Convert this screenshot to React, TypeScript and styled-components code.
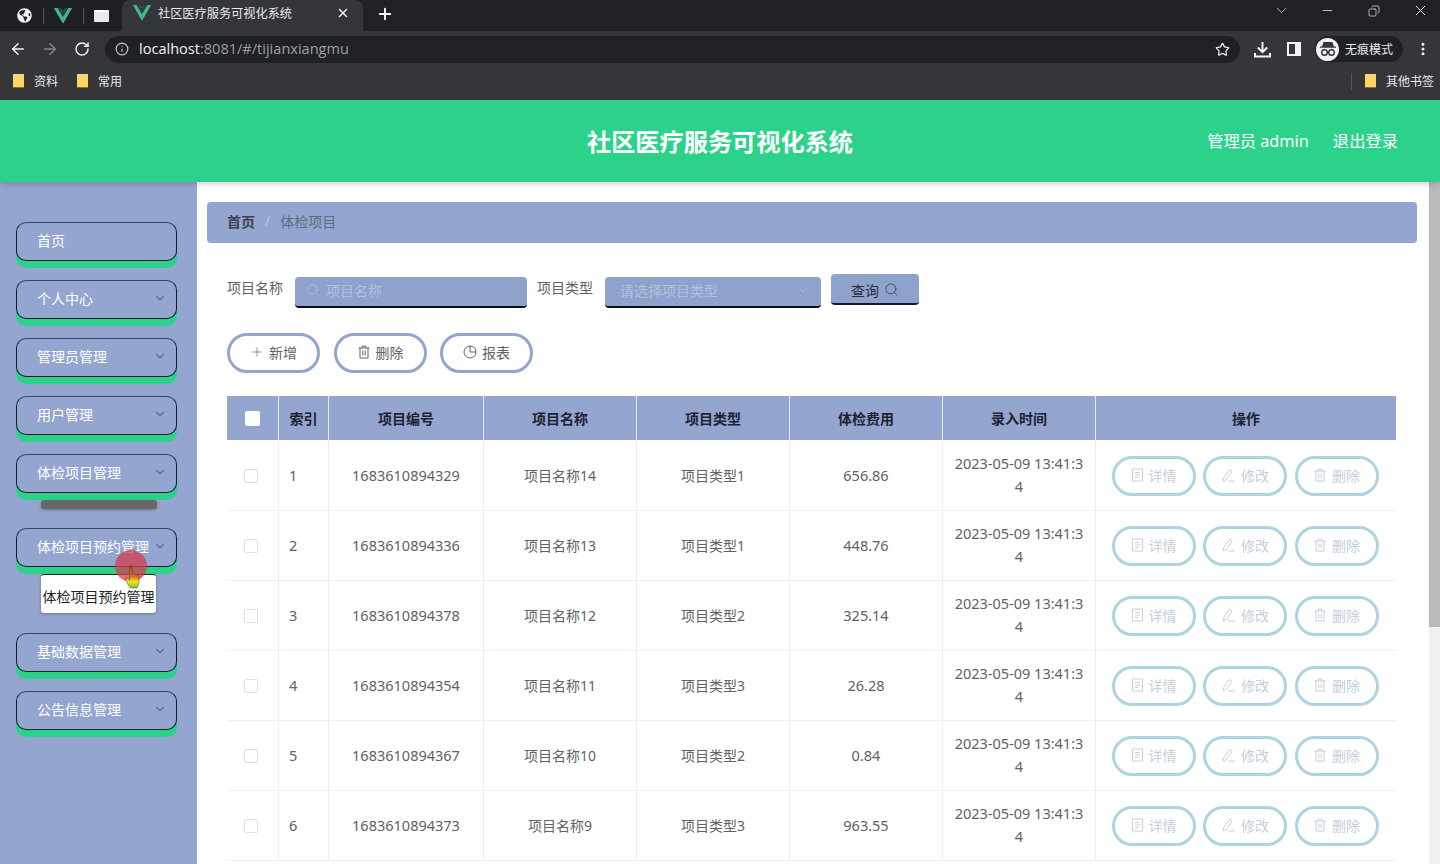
import React from "react";
import styled, { createGlobalStyle } from "styled-components";
import { ArrowLeft, ArrowRight, RotateCw, Info, Star, ChevronDown, Minus, X, Plus, Search, Copy, MoreVertical } from "lucide-react";
import { FaGlobeAmericas } from "react-icons/fa";

const Global = createGlobalStyle`
  html, body { margin: 0; padding: 0; }
  body { font-family: "Noto Sans", "Noto Sans CJK SC", sans-serif; background: #fff; }
  #root { width: 1440px; height: 864px; overflow: hidden; }
  * { box-sizing: border-box; }
`;

const Page = styled.div`
  width: 1440px;
  height: 864px;
  display: flex;
  flex-direction: column;
  overflow: hidden;
  position: relative;
`;

/* ---------- browser chrome ---------- */
const TabStrip = styled.div`
  height: 31px;
  background: #202124;
  display: flex;
  align-items: stretch;
  color: #fff;
`;
const PinnedTabs = styled.div`
  width: 122px;
  display: flex;
  align-items: center;
  padding-left: 17px;
  background: #1f2023;
`;
const PinnedSlot = styled.span<{ $w: number; $pad?: number; $sep?: boolean }>`
  width: ${(p) => p.$w}px;
  flex: none;
  height: 16px;
  display: flex;
  align-items: center;
  padding-left: ${(p) => p.$pad ?? 0}px;
  border-right: ${(p) => (p.$sep ? "1px solid #55575b" : "none")};
`;
const ActiveTab = styled.div`
  width: 241px;
  background: #35363a;
  border-radius: 8px 8px 0 0;
  display: flex;
  align-items: center;
  padding: 0 13px 5px 11px;
  font-size: 12.2px;
  color: #e8eaed;
  gap: 7px;
`;
const TabTitle = styled.span`
  flex: 1;
  white-space: nowrap;
`;
const NewTab = styled.span`
  width: 44px;
  display: flex;
  align-items: center;
  justify-content: center;
  padding-bottom: 3px;
`;
const WindowControls = styled.div`
  margin-left: auto;
  display: flex;
  align-items: center;
  padding: 0 11px 10px 0;
  gap: 29.5px;
  color: #e8eaed;
`;
const WindowSlot = styled.span`
  width: 17px;
  display: flex;
  align-items: center;
  justify-content: center;
`;
const RestoreIcon = styled(Copy)`
  transform: scaleX(-1);
`;
const ToolBar = styled.div`
  height: 36px;
  background: #35363a;
  display: flex;
  align-items: center;
  padding: 0 8px 0 2px;
  color: #e8eaed;
`;
const NavButton = styled.span<{ $dim?: boolean }>`
  width: 32px;
  display: flex;
  justify-content: center;
  color: ${(p) => (p.$dim ? "#85878a" : "#f1f3f4")};
`;
const Omnibox = styled.div`
  width: 1135px;
  height: 27px;
  margin-left: 7px;
  border-radius: 14px;
  background: #202124;
  display: flex;
  align-items: center;
  padding: 0 10px;
  color: #9aa0a6;
`;
const UrlText = styled.span`
  margin-left: 10px;
  flex: 1;
  padding-bottom: 2px;
  font-family: "Open Sans", "Noto Sans", sans-serif;
  font-size: 14.55px;
  b { font-weight: 400; color: #f1f3f4; }
`;
const ToolIcons = styled.div`
  display: flex;
  align-items: center;
  margin-left: 14px;
  gap: 16px;
`;
const Incognito = styled.div`
  width: 88px;
  height: 26px;
  margin-left: -2px;
  border-radius: 13px;
  background: #202124;
  display: flex;
  align-items: center;
  gap: 6px;
  padding-left: 1px;
  font-size: 12px;
  color: #e8eaed;
`;
const IncognitoBadge = styled.span`
  width: 23px;
  height: 23px;
  border-radius: 50%;
  background: #f1f3f4;
  display: flex;
  align-items: center;
  justify-content: center;
`;
const MoreIcon = styled(MoreVertical)`
  margin-left: -4px;
  color: #f1f3f4;
`;
const BookmarkBar = styled.div`
  height: 33px;
  background: #35363a;
  display: flex;
  align-items: center;
  padding: 0 6px 5px 12px;
  font-size: 12px;
  color: #e8eaed;
`;
const Bookmark = styled.span`
  display: flex;
  align-items: center;
  gap: 9px;
  margin-right: 18px;
`;
const OtherBookmarks = styled.span`
  margin-left: auto;
  display: flex;
  align-items: center;
  border-left: 1px solid #55575b;
  padding-left: 12px;
  gap: 9px;
  height: 17px;
`;

/* ---------- app header ---------- */
const Header = styled.header`
  height: 82px;
  background: #2dd28a;
  color: #fff;
  display: flex;
  align-items: center;
  justify-content: center;
  padding-bottom: 2px;
  position: relative;
  z-index: 3;
  box-shadow: 0 2px 6px rgba(0, 0, 0, 0.18);
`;
const AppTitle = styled.h1`
  margin: 0;
  font-size: 24.2px;
  font-weight: 700;
`;
const HeaderUser = styled.div`
  position: absolute;
  right: 42px;
  top: 0;
  bottom: 2px;
  display: flex;
  align-items: center;
  gap: 24px;
  font-size: 16.3px;
`;

/* ---------- body ---------- */
const Body = styled.div`
  flex: 1;
  min-height: 0;
  display: flex;
`;
const Sidebar = styled.nav`
  width: 197px;
  flex: none;
  background: #94a5cf;
  padding: 40px 16px 0;
  display: flex;
  flex-direction: column;
`;
const MenuItem = styled.div`
  width: 161px;
  height: 39px;
  flex: none;
  margin-bottom: 19px;
  border: 1.5px solid #161c30;
  border-top-color: #3a4670;
  border-radius: 10px;
  background: #94a5cf;
  box-shadow: 0 7px 0 #2dd28a;
  display: flex;
  align-items: center;
  justify-content: space-between;
  padding: 0 9px 4px 20px;
  font-size: 14px;
  color: #fff;
  white-space: nowrap;
`;
const MenuArrow = styled(ChevronDown)`
  color: #5d6b93;
`;
const CollapsedSub = styled.div`
  width: 116px;
  height: 9px;
  flex: none;
  margin: -12px 0 19px 25px;
  border-radius: 3px;
  background: #68686c;
  box-shadow: 0 1px 3px rgba(0, 0, 0, 0.3);
`;
const SubItem = styled.div`
  width: 115px;
  height: 39px;
  flex: none;
  margin: -12px 0 20px 25px;
  padding-top: 3px;
  border-radius: 3px;
  border-top: 1px solid #222;
  background: #fff;
  color: #222;
  font-size: 14px;
  display: flex;
  align-items: center;
  justify-content: center;
  white-space: nowrap;
  box-shadow: 0 1px 3px rgba(0, 0, 0, 0.3);
`;
const Content = styled.main`
  flex: 1;
  min-width: 0;
  background: #fff;
  padding: 20px 0 0 10px;
`;
const Scrollbar = styled.div`
  width: 11px;
  flex: none;
  background: #f1f1f1;
`;
const ScrollThumb = styled.div`
  height: 445px;
  background: #bababa;
`;
const Breadcrumb = styled.div`
  width: 1210px;
  height: 41px;
  background: #94a5cf;
  border-radius: 4px;
  display: flex;
  align-items: center;
  padding: 0 0 4px 20px;
  font-size: 14px;
`;
const CrumbStrong = styled.span`
  font-weight: 700;
  color: #3b4252;
`;
const CrumbSep = styled.span`
  margin: 0 10px;
  color: #c0c4cc;
`;
const CrumbLast = styled.span`
  color: #606a85;
`;
const FilterRow = styled.div`
  display: flex;
  align-items: flex-start;
  margin: 31px 0 0 20px;
  height: 34px;
  font-size: 14px;
  color: #606266;
`;
const FilterLabel = styled.label<{ $w: number }>`
  width: ${(p) => p.$w}px;
  line-height: 28px;
`;
const FilterField = styled.div<{ $w: number; $left: number; $right: number }>`
  width: ${(p) => p.$w}px;
  margin: 3px 10px 0 0;
  height: 31px;
  background: #8ea2cc;
  border-radius: 4px;
  border-bottom: 2px solid #0c0c10;
  display: flex;
  align-items: center;
  padding: 0 ${(p) => p.$right}px 3px ${(p) => p.$left}px;
  gap: 6px;
  color: #b3c0dd;
  font-size: 14px;
`;
const FieldText = styled.span`
  flex: 1;
`;
const QueryButton = styled.button`
  width: 88px;
  height: 31px;
  border: 0;
  border-bottom: 2px solid #14182a;
  border-radius: 4px;
  background: #8ea2cc;
  color: #2b2f3a;
  font: inherit;
  font-size: 14px;
  display: flex;
  align-items: center;
  justify-content: center;
  gap: 5px;
  padding: 2px 0 0;
`;
const ActionRow = styled.div`
  display: flex;
  gap: 13.5px;
  margin: 25px 0 0 20px;
`;
const PillButton = styled.button`
  width: 93px;
  height: 40px;
  border: 3px solid #94a5cf;
  border-radius: 20px;
  background: #fff;
  color: #606266;
  font: inherit;
  font-size: 14px;
  display: flex;
  align-items: center;
  justify-content: center;
  gap: 5px;
  padding: 0 0 3px;
`;
const Table = styled.div`
  width: 1169px;
  margin: 23px 0 0 20px;
  font-size: 14px;
  color: #606266;
`;
const cols = "52px 50px 155px 153px 153px 153px 153px 300px";
const HeadRow = styled.div`
  display: grid;
  grid-template-columns: ${cols};
  height: 44px;
  margin-bottom: 1px;
  background: #94a5cf;
  color: #1f2230;
  font-weight: 700;
`;
const HeadCell = styled.div`
  display: flex;
  align-items: center;
  justify-content: center;
  border-right: 1px solid #e6ebf5;
  &:last-child { border-right: 0; }
`;
const Row = styled.div`
  display: grid;
  grid-template-columns: ${cols};
  height: 70px;
`;
const Cell = styled.div<{ $left?: boolean; $num?: boolean }>`
  display: flex;
  align-items: center;
  justify-content: ${(p) => (p.$left ? "flex-start" : "center")};
  padding: 0 10px;
  border-right: 1px solid #ebeef5;
  border-bottom: 1px solid #ebeef5;
  line-height: 23px;
  text-align: center;
  font-size: ${(p) => (p.$num ? "14.5px" : "14px")};
`;
const CheckBox = styled.span<{ $head?: boolean }>`
  width: ${(p) => (p.$head ? 15 : 14)}px;
  height: ${(p) => (p.$head ? 15 : 14)}px;
  margin-right: ${(p) => (p.$head ? 0 : 3)}px;
  border-radius: 2px;
  background: #fff;
  border: 1px solid ${(p) => (p.$head ? "#fff" : "#dcdfe6")};
`;
const DateText = styled.span`
  display: block;
  width: 133px;
  padding-bottom: 2px;
  word-break: break-all;
`;
const OpsCell = styled(Cell)`
  gap: 7.5px;
  padding: 0 2px 0 0;
  border-right: 0;
`;
const OpButton = styled.button`
  width: 84px;
  height: 40px;
  border: 3px solid #aed3e1;
  border-radius: 20px;
  background: #fff;
  color: #c3cfdb;
  font: inherit;
  font-size: 14px;
  display: flex;
  align-items: center;
  justify-content: center;
  gap: 5px;
  padding: 0 0 1px;
`;
const CursorMark = styled.div`
  position: absolute;
  left: 115px;
  top: 550px;
  width: 32px;
  height: 32px;
  border-radius: 50%;
  background: rgba(214, 60, 80, 0.75);
  z-index: 5;
`;
const CursorHand = styled.svg`
  position: absolute;
  left: 9px;
  top: 15px;
`;

/* ---------- drawn icons ---------- */
const VueLogo = () => (
  <svg width="18" height="15.5" viewBox="0 0 256 221">
    <path fill="#41b883" d="M204.8 0H256L128 220.8 0 0h97.92L128 51.2 157.44 0h47.36z" />
    <path fill="#41b883" d="M0 0l128 220.8L256 0h-51.2L128 132.48 50.56 0H0z" />
    <path fill="#2c3f4a" d="M50.56 0L128 133.12 204.8 0h-47.36L128 51.2 97.92 0H50.56z" />
  </svg>
);
const FolderIcon = () => (
  <svg width="13" height="14" viewBox="0 0 13 14">
    <path fill="#fdd663" d="M1 0h8l3 0v13H1z" />
    <path fill="#c9a94a" d="M1 13h11v1H1z" opacity=".5" />
  </svg>
);
const BinIcon = () => (
  <svg width="14" height="14" viewBox="0 0 14 14" fill="none" stroke="currentColor" strokeWidth="1">
    <path d="M1.500 3h11M5 3V1.200h4V3M3 3v10h8V3M5.800 5.500v5M8.200 5.500v5" />
  </svg>
);
const PieIcon = () => (
  <svg width="14" height="14" viewBox="0 0 14 14" fill="none" stroke="currentColor" strokeWidth="1">
    <circle cx="7" cy="7" r="6" />
    <path d="M7 1v6h6" />
  </svg>
);
const DocIcon = () => (
  <svg width="13" height="14" viewBox="0 0 13 14" fill="none" stroke="currentColor" strokeWidth="1">
    <path d="M1.500 1h10v12h-10zM4 4.500h5M4 7h5M4 9.500h3" />
  </svg>
);
const EditIcon = () => (
  <svg width="15" height="14" viewBox="0 0 15 14" fill="none" stroke="currentColor" strokeWidth="1">
    <path d="M2 13l.7-3.500L8.500 1.400l2.600 1.800-5.700 8.200zM7 13h7" />
  </svg>
);
const DownloadIcon = () => (
  <svg width="17" height="17" viewBox="0 0 17 17" fill="none" stroke="#f1f3f4" strokeWidth="2">
    <path d="M8.500 1v10M3.800 6.500l4.700 4.700 4.700-4.700M1 12v3.500h15V12" />
  </svg>
);
const SidePanelIcon = () => (
  <svg width="14" height="14" viewBox="0 0 14 14">
    <path fill="#f1f3f4" d="M0 0h14v14H0z" />
    <path fill="#35363a" d="M2 2h6v10H2z" />
  </svg>
);
const SpyIcon = () => (
  <svg width="18" height="18" viewBox="0 0 18 18">
    <path fill="#35363a" d="M4.500 2h9l1.400 4.500H17v1.200H1V6.500h2.100z" />
    <g fill="none" stroke="#35363a" strokeWidth="1.400">
      <circle cx="5.500" cy="12.500" r="2.800" />
      <circle cx="12.500" cy="12.500" r="2.800" />
      <path d="M8.300 12h1.400" />
    </g>
  </svg>
);
const TabThumb = styled.span`
  width: 15px;
  height: 12px;
  background: #e8eaed;
  border-top: 2px solid #fff;
  border-radius: 1px;
`;

const rows = [
  ["1", "1683610894329", "项目名称14", "项目类型1", "656.86"],
  ["2", "1683610894336", "项目名称13", "项目类型1", "448.76"],
  ["3", "1683610894378", "项目名称12", "项目类型2", "325.14"],
  ["4", "1683610894354", "项目名称11", "项目类型3", "26.28"],
  ["5", "1683610894367", "项目名称10", "项目类型2", "0.84"],
  ["6", "1683610894373", "项目名称9", "项目类型3", "963.55"],
];

const heads = ["项目编号", "项目名称", "项目类型", "体检费用", "录入时间", "操作"];

export default function App() {
  return (
    <Page>
      <Global />
      <TabStrip>
        <PinnedTabs>
          <PinnedSlot $w={27} $sep><FaGlobeAmericas size={15} color="#f1f3f4" /></PinnedSlot>
          <PinnedSlot $w={40} $pad={10} $sep><VueLogo /></PinnedSlot>
          <PinnedSlot $w={30} $pad={10}><TabThumb /></PinnedSlot>
        </PinnedTabs>
        <ActiveTab>
          <VueLogo />
          <TabTitle>社区医疗服务可视化系统</TabTitle>
          <X size={14} color="#f1f3f4" strokeWidth={2.5} />
        </ActiveTab>
        <NewTab><Plus size={18} strokeWidth={2.5} /></NewTab>
        <WindowControls>
          <WindowSlot><ChevronDown size={17} strokeWidth={1.2} color="#c4c6c9" /></WindowSlot>
          <WindowSlot><Minus size={15} strokeWidth={1.2} /></WindowSlot>
          <WindowSlot><RestoreIcon size={12} strokeWidth={1.4} /></WindowSlot>
          <WindowSlot><X size={17} strokeWidth={1.4} /></WindowSlot>
        </WindowControls>
      </TabStrip>
      <ToolBar>
        <NavButton><ArrowLeft size={18} strokeWidth={2} /></NavButton>
        <NavButton $dim><ArrowRight size={18} strokeWidth={2} /></NavButton>
        <NavButton><RotateCw size={16} strokeWidth={2.2} /></NavButton>
        <Omnibox>
          <Info size={14} color="#c4c7cb" />
          <UrlText><b>localhost</b>:8081/#/tijianxiangmu</UrlText>
          <Star size={15} color="#e8eaed" />
        </Omnibox>
        <ToolIcons>
          <DownloadIcon />
          <SidePanelIcon />
          <Incognito>
            <IncognitoBadge><SpyIcon /></IncognitoBadge>
            <span>无痕模式</span>
          </Incognito>
          <MoreIcon size={16} strokeWidth={2.5} />
        </ToolIcons>
      </ToolBar>
      <BookmarkBar>
        <Bookmark><FolderIcon />资料</Bookmark>
        <Bookmark><FolderIcon />常用</Bookmark>
        <OtherBookmarks><FolderIcon />其他书签</OtherBookmarks>
      </BookmarkBar>

      <Header>
        <AppTitle>社区医疗服务可视化系统</AppTitle>
        <HeaderUser>
          <span>管理员 admin</span>
          <span>退出登录</span>
        </HeaderUser>
      </Header>

      <Body>
        <Sidebar>
          <MenuItem><span>首页</span></MenuItem>
          <MenuItem><span>个人中心</span><MenuArrow size={14} /></MenuItem>
          <MenuItem><span>管理员管理</span><MenuArrow size={14} /></MenuItem>
          <MenuItem><span>用户管理</span><MenuArrow size={14} /></MenuItem>
          <MenuItem><span>体检项目管理</span><MenuArrow size={14} /></MenuItem>
          <CollapsedSub />
          <MenuItem><span>体检项目预约管理</span><MenuArrow size={14} /></MenuItem>
          <SubItem>体检项目预约管理</SubItem>
          <MenuItem><span>基础数据管理</span><MenuArrow size={14} /></MenuItem>
          <MenuItem><span>公告信息管理</span><MenuArrow size={14} /></MenuItem>
        </Sidebar>
        <Content>
          <Breadcrumb>
            <CrumbStrong>首页</CrumbStrong>
            <CrumbSep>/</CrumbSep>
            <CrumbLast>体检项目</CrumbLast>
          </Breadcrumb>
          <FilterRow>
            <FilterLabel $w={68}>项目名称</FilterLabel>
            <FilterField $w={232} $left={11} $right={15}>
              <Search size={14} strokeWidth={1.3} />
              <FieldText>项目名称</FieldText>
            </FilterField>
            <FilterLabel $w={68}>项目类型</FilterLabel>
            <FilterField $w={216} $left={15} $right={11}>
              <FieldText>请选择项目类型</FieldText>
              <ChevronDown size={14} strokeWidth={1.3} />
            </FilterField>
            <QueryButton>查询<Search size={15} strokeWidth={1.1} /></QueryButton>
          </FilterRow>
          <ActionRow>
            <PillButton><Plus size={14} strokeWidth={1.2} /> 新增</PillButton>
            <PillButton><BinIcon /> 删除</PillButton>
            <PillButton><PieIcon /> 报表</PillButton>
          </ActionRow>
          <Table>
            <HeadRow>
              <HeadCell><CheckBox $head /></HeadCell>
              <HeadCell>索引</HeadCell>
              {heads.map((h) => <HeadCell key={h}>{h}</HeadCell>)}
            </HeadRow>
            {rows.map((r) => (
              <Row key={r[0]}>
                <Cell><CheckBox /></Cell>
                <Cell $left $num>{r[0]}</Cell>
                <Cell $num>{r[1]}</Cell>
                <Cell>{r[2]}</Cell>
                <Cell>{r[3]}</Cell>
                <Cell $num>{r[4]}</Cell>
                <Cell $num><DateText>2023-05-09 13:41:34</DateText></Cell>
                <OpsCell>
                  <OpButton><DocIcon /> 详情</OpButton>
                  <OpButton><EditIcon /> 修改</OpButton>
                  <OpButton><BinIcon /> 删除</OpButton>
                </OpsCell>
              </Row>
            ))}
          </Table>
        </Content>
        <Scrollbar><ScrollThumb /></Scrollbar>
      </Body>
      <CursorMark>
        <CursorHand width="18" height="24" viewBox="0 0 18 24">
          <defs>
            <linearGradient id="handFill" x1="0" y1="0" x2="0" y2="1">
              <stop offset="0" stopColor="#a4480f" />
              <stop offset="0.5" stopColor="#d9741a" />
              <stop offset="0.72" stopColor="#e6e81e" />
              <stop offset="1" stopColor="#7fc241" />
            </linearGradient>
          </defs>
          <path fill="url(#handFill)" stroke="#6f3208" strokeWidth=".5" d="M5.500 2c0-1.800 3-1.800 3 0v7l1.400-.3 1 .6 1.200-.2 1 .8 1.200.2.700 1V16c0 2.500-1 5-2 7H6.500C5 21 2 17 1.500 14.500c-.3-1.200.9-2.200 2-1.400l2 1.400z" />
        </CursorHand>
      </CursorMark>
    </Page>
  );
}
